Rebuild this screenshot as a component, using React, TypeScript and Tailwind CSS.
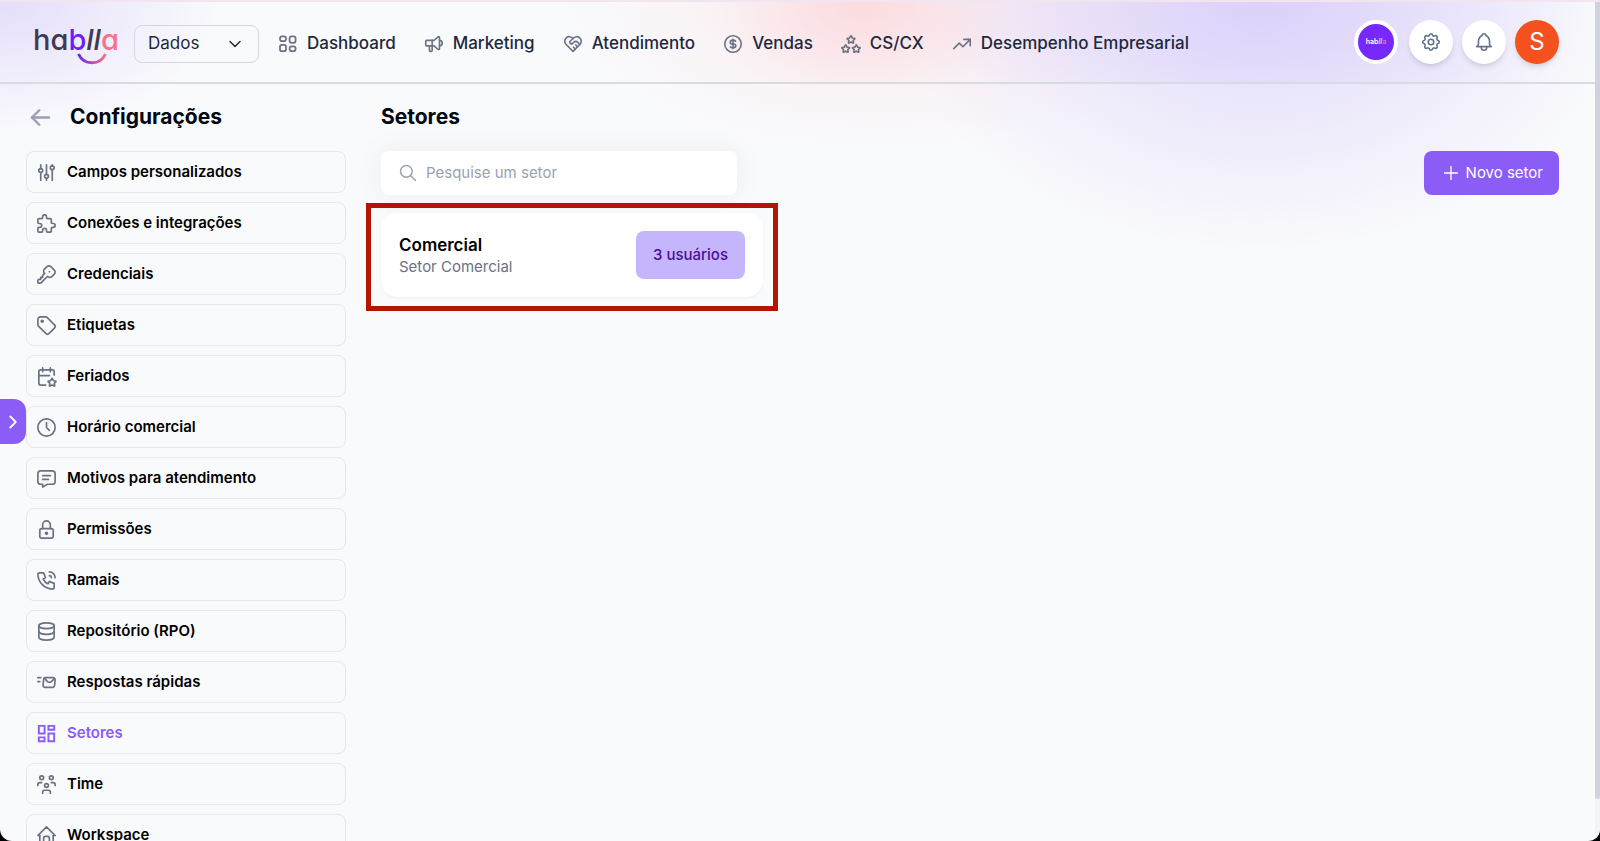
import type { IconType } from 'react-icons'
import {
    TbAdjustments, TbArrowLeft, TbBell, TbCalendarStar, TbChevronDown, TbChevronRight, TbClock, TbCoin,
    TbDatabase, TbHeartHandshake, TbHome, TbKey, TbLock, TbMailFast, TbMessage, TbPhoneCall, TbPlus,
    TbPuzzle, TbSearch, TbSettings, TbSpeakerphone, TbStars, TbTag, TbTrendingUp, TbUsersGroup,
} from 'react-icons/tb'
import { MdOutlineDashboard } from 'react-icons/md'

type Item = { label: string; icon: IconType | typeof GridIcon; active?: boolean }

function GridIcon({ className }: { className?: string }) {
    return (
        <svg viewBox="0 0 22 22" fill="none" stroke="currentColor" className={className} aria-hidden="true">
            <rect x="3" y="3.4" width="6" height="4.8" rx="2.2" />
            <rect x="12.6" y="3.4" width="6" height="6.4" rx="2" />
            <rect x="3" y="11.8" width="6" height="6.4" rx="2" />
            <rect x="12.6" y="13.4" width="6" height="4.8" rx="2.2" />
        </svg>
    )
}

const navItems: Item[] = [
    { label: 'Dashboard', icon: GridIcon },
    { label: 'Marketing', icon: TbSpeakerphone },
    { label: 'Atendimento', icon: TbHeartHandshake },
    { label: 'Vendas', icon: TbCoin },
    { label: 'CS/CX', icon: TbStars },
    { label: 'Desempenho Empresarial', icon: TbTrendingUp },
]

const settings: Item[] = [
    { label: 'Campos personalizados', icon: TbAdjustments },
    { label: 'Conexões e integrações', icon: TbPuzzle },
    { label: 'Credenciais', icon: TbKey },
    { label: 'Etiquetas', icon: TbTag },
    { label: 'Feriados', icon: TbCalendarStar },
    { label: 'Horário comercial', icon: TbClock },
    { label: 'Motivos para atendimento', icon: TbMessage },
    { label: 'Permissões', icon: TbLock },
    { label: 'Ramais', icon: TbPhoneCall },
    { label: 'Repositório (RPO)', icon: TbDatabase },
    { label: 'Respostas rápidas', icon: TbMailFast },
    { label: 'Setores', icon: MdOutlineDashboard, active: true },
    { label: 'Time', icon: TbUsersGroup },
    { label: 'Workspace', icon: TbHome },
]

function Logo() {
    return (
        <a href="#" className="relative mb-2 block w-[84px] text-[29px] leading-9 font-medium text-[#3f3a52] [font-feature-settings:'cv11']">
            ha<span className="text-[#6a1ff5]">b</span>
            <span className="italic">ll</span>
            <span className="text-[#fb7185]">a</span>
            <svg viewBox="0 0 30 12" fill="none" className="absolute top-[31px] left-11 h-3 w-[30px]" aria-hidden="true">
                <defs>
                    <linearGradient id="smile" x1="0" x2="1">
                        <stop offset="0" stopColor="#6a2be8" />
                        <stop offset="1" stopColor="#fb7185" />
                    </linearGradient>
                </defs>
                <path d="M1.5 1C4 6.500 9 9.800 15 9.800S26 6.500 28.500 1" stroke="url(#smile)" strokeWidth="3" />
            </svg>
        </a>
    )
}

function Header() {
    return (
        <header className="flex h-[82px] items-center justify-between border-b-2 border-[#d9dbe3] bg-[radial-gradient(ellipse_150px_110px_at_860px_0px,#fcd0d699,transparent),radial-gradient(ellipse_330px_150px_at_1260px_0px,#d6c9fa88,transparent)] pr-9 pl-[33px]">
            <div className="flex items-center pt-1">
                <Logo />
                <button className="ml-[17px] flex h-[38px] w-[125px] items-center justify-between rounded-lg border border-[#d5d7df] px-[13px] text-[17px] text-slate-800">
                    Dados
                    <TbChevronDown className="size-5 stroke-[1.75]" />
                </button>
                <nav className="ml-[18px] flex items-center gap-[27px]">
                    {navItems.map(({ label, icon: Icon }) => (
                        <a key={label} href="#" className="flex items-center gap-2 text-[17px] font-medium whitespace-nowrap text-slate-800">
                            <Icon className="size-[22px] stroke-[1.75] text-[#6b7285]" />
                            {label}
                        </a>
                    ))}
                </nav>
            </div>
            <div className="flex items-center gap-[9px]">
                <button aria-label="Hablla" className="mr-[2px] flex size-11 items-center justify-center rounded-full border-4 border-white bg-[#7728fb] text-[7px] font-semibold text-white">
                    <span>hab<span className="text-violet-200 italic">ll</span><span className="text-rose-400">a</span></span>
                </button>
                <button aria-label="Configurações" className="flex size-11 items-center justify-center rounded-full bg-white text-slate-500 shadow-md">
                    <TbSettings className="size-[22px] stroke-[1.75]" />
                </button>
                <button aria-label="Notificações" className="flex size-11 items-center justify-center rounded-full bg-white text-slate-500 shadow-md">
                    <TbBell className="size-[22px] stroke-[1.75]" />
                </button>
                <button className="size-11 rounded-full bg-[#f4511e] text-2xl text-white shadow-md">S</button>
            </div>
        </header>
    )
}

function Sidebar() {
    return (
        <aside className="w-[320px] shrink-0">
            <div className="flex h-8 items-center gap-[15px]">
                <button aria-label="Voltar" className="text-gray-400">
                    <TbArrowLeft className="size-[29px]" />
                </button>
                <h2 className="text-[21px] font-bold text-gray-950">Configurações</h2>
            </div>
            <ul className="mt-[18px] space-y-[9px]">
                {settings.map(({ label, icon: Icon, active }) => (
                    <li key={label}>
                        <a
                            href="#"
                            className={`flex h-[42px] items-center gap-[9px] rounded-lg border border-gray-200 px-2 text-[15px] font-semibold ${active ? 'text-[#8b5cf6]' : 'text-black'}`}
                        >
                            <Icon className={active ? 'size-[23px]' : 'size-[23px] stroke-[1.75] text-gray-500'} />
                            {label}
                        </a>
                    </li>
                ))}
            </ul>
        </aside>
    )
}

function Sectors() {
    return (
        <main className="min-w-0 flex-1">
            <h1 className="h-8 pl-[15px] text-[21px] leading-8 font-bold text-gray-950">Setores</h1>
            <div className="mt-[18px] flex items-center justify-between pl-[15px]">
                <label className="flex h-11 w-[356px] items-center gap-2 rounded-lg bg-white px-[17px] shadow-[0_0_24px_#6b728018]">
                    <TbSearch className="size-5 shrink-0 stroke-[1.75] text-gray-400" />
                    <input
                        type="text"
                        aria-label="Pesquise um setor"
                        placeholder="Pesquise um setor"
                        className="w-full bg-transparent text-[15px] outline-none placeholder:text-gray-400"
                    />
                </label>
                <button className="flex h-11 items-center gap-1 rounded-lg bg-[#8b5cf6] px-4 text-[15px] text-white">
                    <TbPlus className="size-[22px] stroke-[1.5]" />
                    Novo setor
                </button>
            </div>
            <div className="mt-2 w-[412px] border-5 border-[#b31500] px-[10px] pt-[5px] pb-[9px]">
                <a href="#" className="flex items-center justify-between rounded-2xl bg-white p-[18px] shadow-xs">
                    <span className="flex flex-col">
                        <strong className="text-[17px] leading-6 font-semibold text-black">Comercial</strong>
                        <span className="text-[15px] leading-5 text-gray-500">Setor Comercial</span>
                    </span>
                    <span className="rounded-lg bg-[#c4b5fd] px-[17px] py-3 text-[15px] leading-6 font-medium text-[#4c0d99]">3 usuários</span>
                </a>
            </div>
        </main>
    )
}

export default function App() {
    return (
        <div className="h-screen bg-black font-['Inter',sans-serif]">
            <div className="relative h-full overflow-hidden rounded-b-xl border-t-2 border-[#f1e6f0] bg-[#f9fafc] bg-[radial-gradient(ellipse_220px_130px_at_0px_0px,#dcd0fab0,transparent),radial-gradient(ellipse_320px_150px_at_880px_0px,#fcd8dc70,transparent),radial-gradient(ellipse_360px_250px_at_1260px_0px,#d8ccfab0,transparent)] pr-[5px]">
                <Header />
                <div className="flex gap-5 pt-[17px] pr-9 pl-[26px]">
                    <Sidebar />
                    <Sectors />
                </div>
                <button aria-label="Abrir menu" className="absolute top-[397px] left-0 flex h-[45px] w-[26px] items-center justify-center rounded-r-xl bg-[#8b5cf6] text-white">
                    <TbChevronRight className="size-[22px]" />
                </button>
                <div className="absolute top-0 right-0 bottom-0 w-[5px] bg-gray-100 pb-[42px]">
                    <div className="h-full rounded-b-full bg-[#d0d2dc]" />
                </div>
            </div>
        </div>
    )
}
